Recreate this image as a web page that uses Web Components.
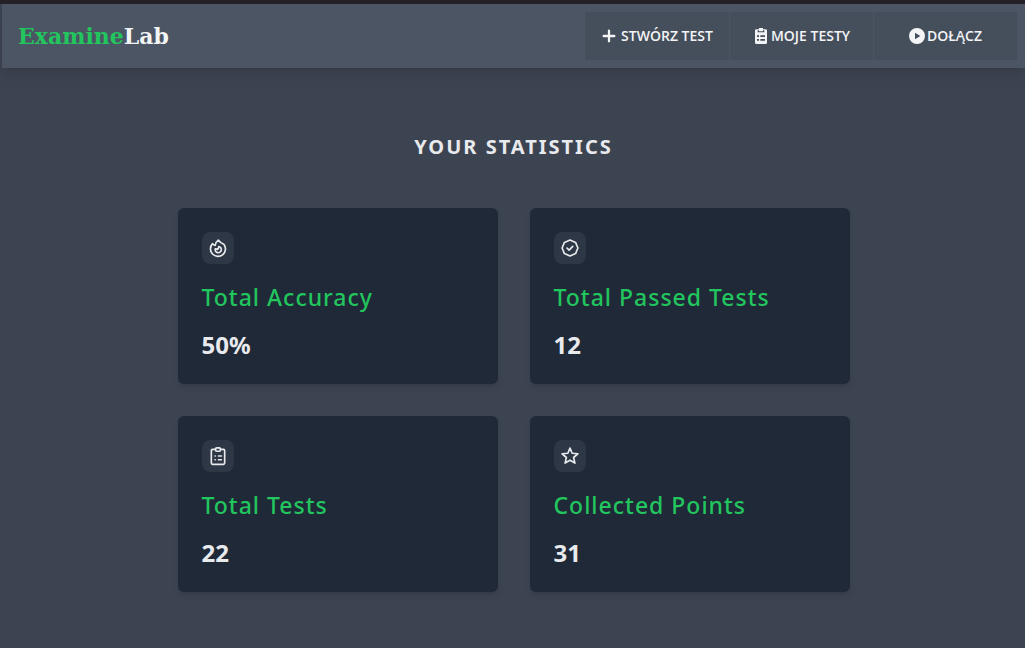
<!DOCTYPE html>
<html lang="en">
<head>
<meta charset="utf-8">
<meta name="viewport" content="width=device-width, initial-scale=1">
<title>ExamineLab</title>
<style>
html, body { margin: 0; }
body {
  min-height: 100vh;
  box-sizing: border-box;
  border-top: 4px solid #242227;
  padding-left: 2px;
  background: #3d4451;
  color: #e8eaee;
  font-family: "Segoe UI", "Noto Sans", "Open Sans", sans-serif;
}
</style>
</head>
<body>
<lab-navbar>
  <lab-menu-button icon="plus">STWÓRZ TEST</lab-menu-button>
  <lab-menu-button icon="tests">MOJE TESTY</lab-menu-button>
  <lab-menu-button icon="play">DOŁĄCZ</lab-menu-button>
</lab-navbar>
<lab-stats>
  <span slot="title">YOUR STATISTICS</span>
  <lab-stat-card icon="fire" value="50%">Total Accuracy</lab-stat-card>
  <lab-stat-card icon="badge" value="12">Total Passed Tests</lab-stat-card>
  <lab-stat-card icon="clipboard" value="22">Total Tests</lab-stat-card>
  <lab-stat-card icon="star" value="31">Collected Points</lab-stat-card>
</lab-stats>

<script>
const ICONS = {
  plus: '<path d="M12 4v16M4 12h16" fill="none" stroke="currentColor" stroke-width="3.400" stroke-linecap="round"/>',
  tests: '<path fill="currentColor" fill-rule="evenodd" d="M9 0h6v2h4a2 2 0 0 1 2 2v18a2 2 0 0 1-2 2H5a2 2 0 0 1-2-2V4a2 2 0 0 1 2-2h4zM7 3.500v3h10v-3h-2v1.500H9V3.500zM6 11v2.500h3V11zM11 11v2.500h7V11zM6 16.500V19h3v-2.500zM11 16.500V19h7v-2.500z"/>',
  play: '<path fill="currentColor" fill-rule="evenodd" d="M12 0a12 12 0 1 0 0 24 12 12 0 0 0 0-24zM9 7l8 5-8 5z"/>',
  fire: '<g fill="none" stroke="currentColor" stroke-width="2" stroke-linejoin="round" stroke-linecap="round"><path d="M12.300 2.500C10 4.200 8.800 6.400 8.600 9 7.500 8.700 6.400 7.900 5.500 6.800A9 9 0 1 0 19 7.500C15.800 6.400 13.800 4.600 12.300 2.500z"/><path d="M12.800 10.300c.2 1.700-.6 2.800-1.600 3.400-.7-.6-1.500-.8-2.500-.6a3.700 3.700 0 1 0 4.100-2.800z"/></g>',
  badge: '<g fill="none" stroke="currentColor" stroke-width="2" stroke-linejoin="round" stroke-linecap="round"><path d="M12 2.500l3.300 1.400 3.400 1.400 1.400 3.400 1.400 3.300-1.400 3.300-1.400 3.400-3.400 1.400-3.300 1.400-3.300-1.400-3.400-1.400-1.400-3.400L2.500 12l1.400-3.300 1.400-3.400 3.400-1.400z"/><path d="M8.500 12.200l2.500 2.300 4.300-4.500"/></g>',
  clipboard: '<g fill="none" stroke="currentColor" stroke-width="2" stroke-linejoin="round" stroke-linecap="round"><path d="M9 4H5.500A1.500 1.500 0 0 0 4 5.500v15A1.500 1.500 0 0 0 5.500 22h13a1.500 1.500 0 0 0 1.500-1.500v-15A1.500 1.500 0 0 0 18.500 4H15"/><rect x="9" y="2.300" width="6" height="4" rx="1.500"/><path d="M8.500 12h.2M12.500 12h3.500M8.500 16.500h.2M12.500 16.500h3.500"/></g>',
  star: '<path d="M12 2.500l2.600 6.200 6.900.6-5.200 4.500 1.600 6.700L12 17l-5.900 3.500 1.600-6.700-5.200-4.500 6.900-.6z" fill="none" stroke="currentColor" stroke-width="2" stroke-linejoin="round"/>'
};
const svg = name => `<svg viewBox="0 0 24 24" aria-hidden="true">${ICONS[name] || ''}</svg>`;

class LabNavbar extends HTMLElement {
  constructor() {
    super();
    this.attachShadow({ mode: 'open' }).innerHTML = `
      <style>
        :host { display: block; }
        nav {
          display: flex; align-items: center; justify-content: space-between;
          min-height: 64px; box-sizing: border-box; padding: 8px 8px 8px 16px;
          background: #4b5563;
          box-shadow: 0 10px 15px -3px rgb(0 0 0 / .1), 0 4px 6px -4px rgb(0 0 0 / .1);
        }
        a {
          color: #f3f4f6; text-decoration: none; white-space: nowrap;
          font: bold 22px/32px "DejaVu Serif", serif;
        }
        a span { color: #22c55e; }
        .menu { display: flex; }
      </style>
      <nav>
        <a href="#"><span>Examine</span>Lab</a>
        <div class="menu"><slot></slot></div>
      </nav>`;
  }
}

class LabMenuButton extends HTMLElement {
  constructor() {
    super();
    this.attachShadow({ mode: 'open' }).innerHTML = `
      <style>
        :host { display: block; width: 144px; }
        :host(:not(:first-of-type)) button { border-left: 1px solid #4b5563; }
        button {
          display: flex; align-items: center; justify-content: center; gap: 2px;
          width: 100%; height: 48px; padding: 0; border: 0; box-sizing: border-box;
          background: #454e5b; color: #f3f4f6; cursor: pointer;
          font: 600 14px/20px "Segoe UI", "Open Sans", sans-serif; white-space: nowrap;
        }
        :host([icon="plus"]) button { gap: 4px; }
        button:hover { background: #3d4451; }
        svg { width: 16px; height: 16px; flex: none; }
      </style>
      <button type="button">${svg(this.getAttribute('icon'))}<span><slot></slot></span></button>`;
  }
}

class LabStats extends HTMLElement {
  constructor() {
    super();
    this.attachShadow({ mode: 'open' }).innerHTML = `
      <style>
        :host { display: block; padding: 64px 24px 56px; }
        h1 {
          margin: 0 0 46px; text-align: center;
          font-size: 20px; line-height: 30px; font-weight: 700; letter-spacing: 2px;
        }
        .grid {
          display: grid; grid-template-columns: repeat(2, minmax(0, 1fr)); gap: 32px;
          max-width: 672px; margin: 0 auto;
        }
        @media (max-width: 640px) { .grid { grid-template-columns: 1fr; } }
      </style>
      <main>
        <h1><slot name="title"></slot></h1>
        <div class="grid"><slot></slot></div>
      </main>`;
  }
}

class LabStatCard extends HTMLElement {
  constructor() {
    super();
    this.attachShadow({ mode: 'open' }).innerHTML = `
      <style>
        :host {
          display: block; padding: 24px; border-radius: 6px; background: #1f2937;
          box-shadow: 0 4px 6px -1px rgb(0 0 0 / .1), 0 2px 4px -2px rgb(0 0 0 / .1);
        }
        .icon {
          display: flex; align-items: center; justify-content: center;
          width: 32px; height: 32px; border-radius: 8px; background: #2e3745;
        }
        svg { width: 20px; height: 20px; }
        h2 {
          margin: 14px 0; color: #22c55e;
          font-size: 23px; line-height: 38px; font-weight: 500; letter-spacing: 1px;
        }
        p { margin: 0; font-size: 24px; line-height: 30px; font-weight: 700; }
      </style>
      <div class="icon">${svg(this.getAttribute('icon'))}</div>
      <h2><slot></slot></h2>
      <p>${this.getAttribute('value')}</p>`;
  }
}

customElements.define('lab-navbar', LabNavbar);
customElements.define('lab-menu-button', LabMenuButton);
customElements.define('lab-stats', LabStats);
customElements.define('lab-stat-card', LabStatCard);
</script>
</body>
</html>
